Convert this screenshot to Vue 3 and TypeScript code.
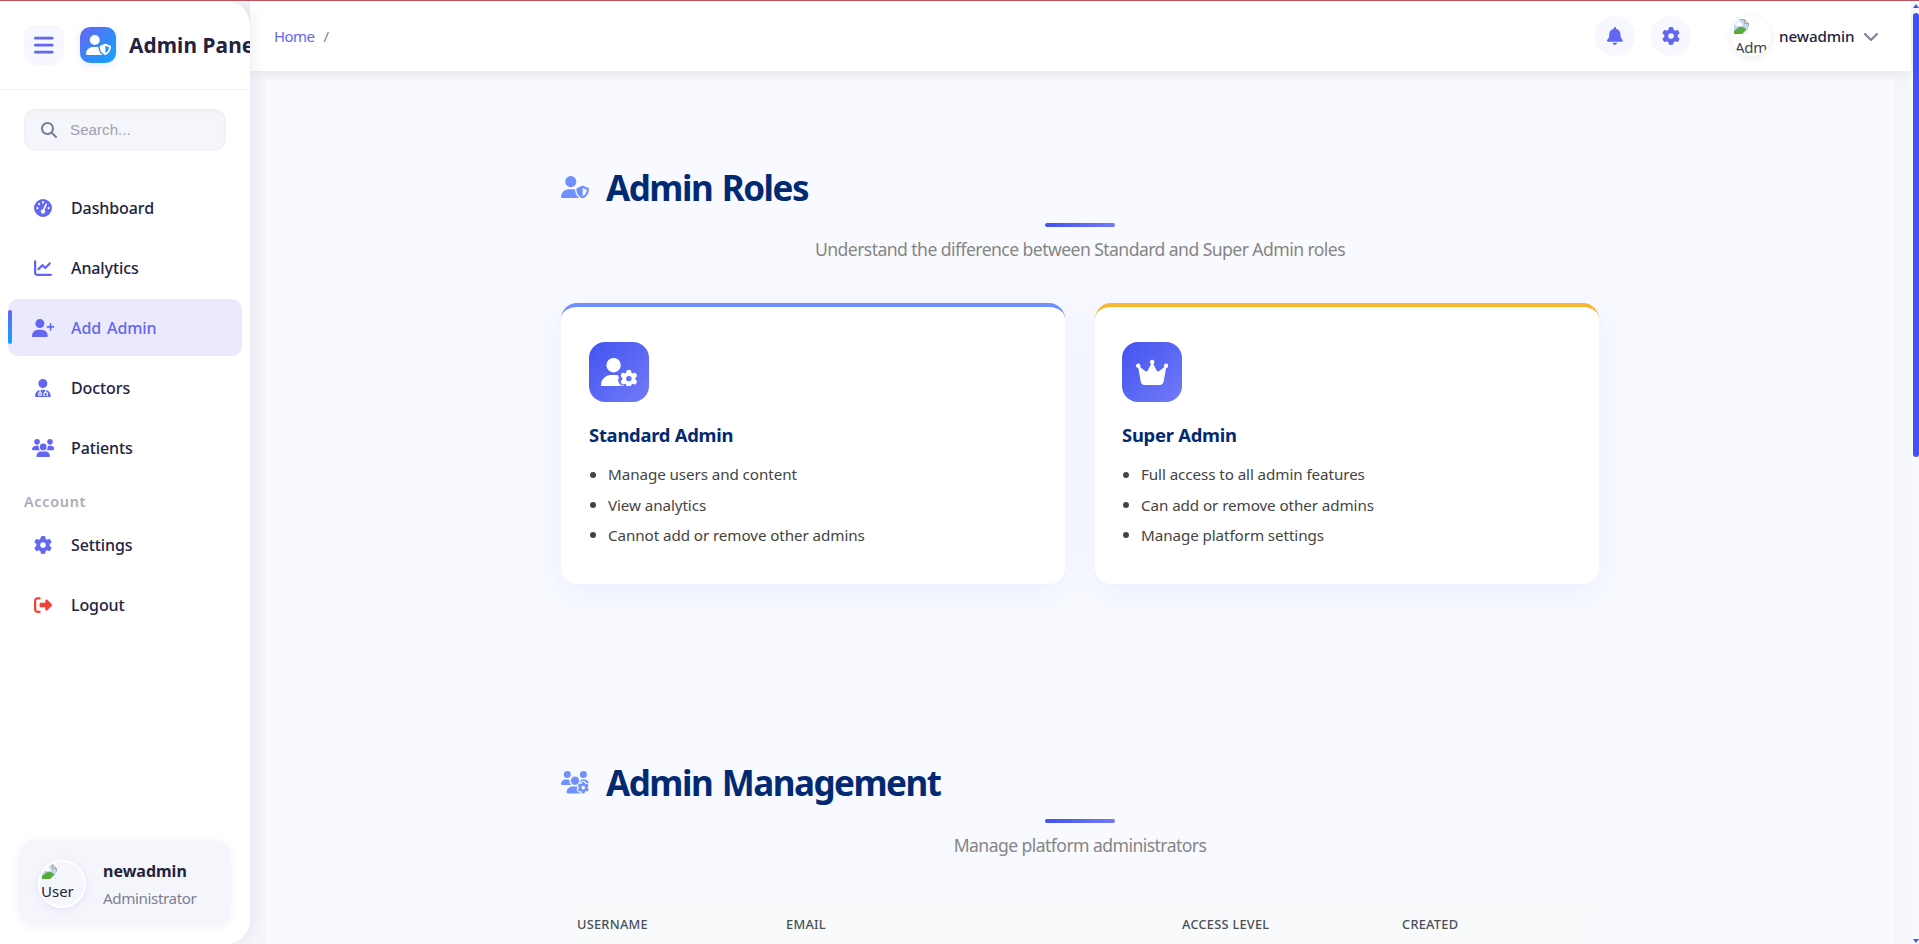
<script setup lang="ts">
interface Icon {
  w: number
  d: string
  gear?: string
}

const gearPath =
  'M495.9 166.6c3.2 8.7 .5 18.4-6.4 24.6l-43.3 39.4c1.1 8.3 1.7 16.8 1.7 25.4s-.6 17.1-1.7 25.4l43.3 39.4c6.9 6.2 9.6 15.9 6.4 24.6c-4.4 11.9-9.7 23.3-15.8 34.3l-4.7 8.1c-6.6 11-14 21.4-22.1 31.2c-5.9 7.2-15.7 9.6-24.5 6.8l-55.7-17.7c-13.4 10.3-28.2 18.9-44 25.4l-12.5 57.1c-2 9.1-9 16.3-18.2 17.8c-13.8 2.3-28 3.5-42.5 3.5s-28.7-1.2-42.5-3.5c-9.2-1.5-16.2-8.7-18.2-17.8l-12.5-57.1c-15.8-6.5-30.6-15.1-44-25.4L83.1 425.9c-8.8 2.8-18.6 .3-24.5-6.8c-8.1-9.8-15.5-20.2-22.1-31.2l-4.7-8.1c-6.1-11-11.4-22.4-15.8-34.3c-3.2-8.7-.5-18.4 6.4-24.6l43.3-39.4C64.6 273.1 64 264.6 64 256s.6-17.1 1.7-25.4L22.4 191.2c-6.9-6.2-9.6-15.9-6.4-24.6c4.4-11.9 9.7-23.3 15.8-34.3l4.7-8.1c6.6-11 14-21.4 22.1-31.2c5.9-7.2 15.7-9.6 24.5-6.8l55.7 17.7c13.4-10.3 28.2-18.9 44-25.4l12.5-57.1c2-9.1 9-16.3 18.2-17.8C227.3 1.2 241.5 0 256 0s28.7 1.2 42.5 3.5c9.2 1.5 16.2 8.7 18.2 17.8l12.5 57.1c15.8 6.5 30.6 15.1 44 25.4l55.7-17.7c8.8-2.8 18.6-.3 24.5 6.8c8.1 9.8 15.5 20.2 22.1 31.2l4.7 8.1c6.1 11 11.4 22.4 15.8 34.3zM256 336a80 80 0 1 0 0-160 80 80 0 1 0 0 160z'

const icons: Record<string, Icon> = {
  bars: { w: 448, d: 'M0 96C0 78.3 14.3 64 32 64H416c17.7 0 32 14.3 32 32s-14.3 32-32 32H32C14.3 128 0 113.7 0 96zM0 256c0-17.7 14.3-32 32-32H416c17.7 0 32 14.3 32 32s-14.3 32-32 32H32c-17.7 0-32-14.3-32-32zM448 416c0 17.7-14.3 32-32 32H32c-17.7 0-32-14.3-32-32s14.3-32 32-32H416c17.7 0 32 14.3 32 32z' },
  userShield: { w: 640, d: 'M224 256A128 128 0 1 0 224 0a128 128 0 1 0 0 256zm-45.7 48C79.8 304 0 383.8 0 482.3C0 498.7 13.3 512 29.7 512H418.3c1.8 0 3.5-.2 5.3-.5c-76.3-55.1-99.8-141-103.1-200.2c-16.1-4.8-33.1-7.3-50.7-7.3H178.3zm308.8-78.3l-120 48C358 277.4 352 286.2 352 296c0 63.3 25.9 168.8 134.8 214.2c5.9 2.5 12.6 2.5 18.5 0C614.1 464.8 640 359.3 640 296c0-9.8-6-18.6-15.1-22.3l-120-48c-5.7-2.3-12.1-2.3-17.8 0zM591.4 312c-3.9 50.7-27.2 116.7-95.4 149.7V273.8L591.4 312z' },
  search: { w: 512, d: 'M416 208c0 45.9-14.9 88.3-40 122.7L502.6 457.4c12.5 12.5 12.5 32.8 0 45.3s-32.8 12.5-45.3 0L330.7 376c-34.4 25.2-76.8 40-122.7 40C93.1 416 0 322.9 0 208S93.1 0 208 0S416 93.1 416 208zM208 352a144 144 0 1 0 0-288 144 144 0 1 0 0 288z' },
  gauge: { w: 512, d: 'M0 256a256 256 0 1 1 512 0A256 256 0 1 1 0 256zM288 96a32 32 0 1 0 -64 0 32 32 0 1 0 64 0zM256 416c35.3 0 64-28.7 64-64c0-17.4-6.9-33.1-18.1-44.6L366 161.7c5.3-12.1-.2-26.3-12.3-31.6s-26.3 .2-31.6 12.3L257.9 288c-.6 0-1.3 0-1.9 0c-35.3 0-64 28.7-64 64s28.7 64 64 64zM176 144a32 32 0 1 0 -64 0 32 32 0 1 0 64 0zM96 288a32 32 0 1 0 0-64 32 32 0 1 0 0 64zm352-32a32 32 0 1 0 -64 0 32 32 0 1 0 64 0z' },
  chart: { w: 512, d: 'M64 64c0-17.7-14.3-32-32-32S0 46.3 0 64V400c0 44.2 35.8 80 80 80H480c17.7 0 32-14.3 32-32s-14.3-32-32-32H80c-8.8 0-16-7.2-16-16V64zm406.6 86.6c12.5-12.5 12.5-32.8 0-45.3s-32.8-12.5-45.3 0L320 210.7l-57.4-57.4c-12.5-12.5-32.8-12.5-45.3 0l-112 112c-12.5 12.5-12.5 32.8 0 45.3s32.8 12.5 45.3 0L240 221.3l57.4 57.4c12.5 12.5 32.8 12.5 45.3 0l128-128z' },
  userPlus: { w: 640, d: 'M96 128a128 128 0 1 1 256 0A128 128 0 1 1 96 128zM0 482.3C0 383.8 79.8 304 178.3 304h91.4C368.2 304 448 383.8 448 482.3c0 16.4-13.3 29.7-29.7 29.7H29.7C13.3 512 0 498.7 0 482.3zM504 312V248H440c-13.3 0-24-10.7-24-24s10.7-24 24-24h64V136c0-13.3 10.7-24 24-24s24 10.7 24 24v64h64c13.3 0 24 10.7 24 24s-10.7 24-24 24H552v64c0 13.3-10.7 24-24 24s-24-10.7-24-24z' },
  doctor: { w: 448, d: 'M224 256a128 128 0 1 0 0-256 128 128 0 1 0 0 256zm-96 55.2C54 332.9 0 401.3 0 482.3C0 498.7 13.3 512 29.7 512H418.3c16.4 0 29.7-13.3 29.7-29.7c0-81-54-149.4-128-171.1V362c27.6 7.1 48 32.2 48 62v40c0 8.8-7.2 16-16 16H336c-8.8 0-16-7.2-16-16s7.2-16 16-16V424c0-17.7-14.3-32-32-32s-32 14.3-32 32v24c8.8 0 16 7.2 16 16s-7.2 16-16 16H256c-8.8 0-16-7.2-16-16V424c0-29.8 20.4-54.9 48-62V304.9c-6-.6-12.1-.9-18.3-.9H178.3c-6.2 0-12.3 .3-18.3 .9v65.4c23.1 6.9 40 28.3 40 53.7c0 30.9-25.1 56-56 56s-56-25.1-56-56c0-25.4 16.9-46.8 40-53.7V311.2zM144 448a24 24 0 1 0 0-48 24 24 0 1 0 0 48z' },
  users: { w: 640, d: 'M144 0a80 80 0 1 1 0 160A80 80 0 1 1 144 0zM512 0a80 80 0 1 1 0 160A80 80 0 1 1 512 0zM0 298.7C0 239.8 47.8 192 106.7 192h42.7c15.9 0 31 3.5 44.6 9.7c-1.3 7.2-1.9 14.7-1.9 22.3c0 38.2 16.8 72.5 43.3 96c-.2 0-.4 0-.7 0H21.3C9.6 320 0 310.4 0 298.7zM405.3 320c-.2 0-.4 0-.7 0c26.6-23.5 43.3-57.8 43.3-96c0-7.6-.7-15-1.9-22.3c13.6-6.3 28.7-9.7 44.6-9.7h42.7C592.2 192 640 239.8 640 298.7c0 11.8-9.6 21.3-21.3 21.3H405.3zM224 224a96 96 0 1 1 192 0 96 96 0 1 1 -192 0zM128 485.3C128 411.7 187.7 352 261.3 352H378.7C452.3 352 512 411.7 512 485.3c0 14.7-11.9 26.7-26.7 26.7H154.7c-14.7 0-26.7-11.9-26.7-26.7z' },
  gear: { w: 512, d: gearPath },
  logout: { w: 512, d: 'M377.9 105.9L500.7 228.7c7.2 7.2 11.3 17.1 11.3 27.3s-4.1 20.1-11.3 27.3L377.9 406.1c-6.4 6.4-15 9.9-24 9.9c-18.7 0-33.9-15.2-33.9-33.9l0-62.1-128 0c-17.7 0-32-14.3-32-32l0-64c0-17.7 14.3-32 32-32l128 0 0-62.1c0-18.7 15.2-33.9 33.9-33.9c9 0 17.6 3.6 24 9.9zM160 96L96 96c-17.7 0-32 14.3-32 32l0 256c0 17.7 14.3 32 32 32l64 0c17.7 0 32 14.3 32 32s-14.3 32-32 32l-64 0c-53 0-96-43-96-96L0 128C0 75 43 32 96 32l64 0c17.7 0 32 14.3 32 32s-14.3 32-32 32z' },
  bell: { w: 448, d: 'M224 0c-17.7 0-32 14.3-32 32V51.2C119 66 64 130.6 64 208v18.8c0 47-17.3 92.4-48.5 127.6l-7.4 8.3c-8.4 9.4-10.4 22.9-5.3 34.4S19.4 416 32 416H416c12.6 0 24-7.4 29.2-18.9s3.1-25-5.3-34.4l-7.4-8.3C401.3 319.2 384 273.9 384 226.8V208c0-77.4-55-142-128-156.8V32c0-17.7-14.3-32-32-32zm45.3 493.3c12-12 18.7-28.3 18.7-45.3H224 160c0 17 6.7 33.3 18.7 45.3s28.3 18.7 45.3 18.7s33.3-6.7 45.3-18.7z' },
  chevron: { w: 512, d: 'M233.4 406.6c12.5 12.5 32.8 12.5 45.3 0l192-192c12.5-12.5 12.5-32.8 0-45.3s-32.8-12.5-45.3 0L256 338.7 86.6 169.4c-12.5-12.5-32.8-12.5-45.3 0s-12.5 32.8 0 45.3l192 192z' },
  crown: { w: 576, d: 'M309 106c11.4-7 19-19.7 19-34c0-22.1-17.9-40-40-40s-40 17.9-40 40c0 14.4 7.6 27 19 34L209.7 220.6c-9.1 18.2-32.7 23.4-48.6 10.7L72 160c5-6.7 8-15 8-24c0-22.1-17.9-40-40-40S0 113.9 0 136s17.9 40 40 40c.2 0 .5 0 .7 0L86.4 427.4c5.5 30.4 32 52.6 63 52.6H426.6c30.9 0 57.4-22.1 63-52.6L535.3 176c.2 0 .5 0 .7 0c22.1 0 40-17.9 40-40s-17.9-40-40-40s-40 17.9-40 40c0 9 3 17.3 8 24l-89.1 71.3c-15.9 12.7-39.5 7.5-48.6-10.7L309 106z' },
  userGear: { w: 640, gear: 'translate(340 212) scale(.606)', d: 'M224 0a128 128 0 1 1 0 256A128 128 0 1 1 224 0zM178.3 304h91.4c11.8 0 23.4 1.2 34.5 3.3c-2.1 18.5 7.4 35.6 21.8 44.8c-16.6 10.6-26.7 31.6-20 53.3c4 12.9 9.4 25.5 16.4 37.6s15.2 23.1 24.4 33c15.7 16.9 39.6 18.4 57.2 8.7v.9c0 9.2 2.7 18.5 7.9 26.3H29.7C13.3 512 0 498.7 0 482.3C0 383.8 79.8 304 178.3 304z' },
  usersGear: { w: 640, gear: 'translate(378 250) scale(.512)', d: 'M144 160A80 80 0 1 0 144 0a80 80 0 1 0 0 160zm368 0A80 80 0 1 0 512 0a80 80 0 1 0 0 160zM0 298.7C0 310.4 9.6 320 21.3 320H234.7c.2 0 .4 0 .7 0c-26.6-23.5-43.3-57.8-43.3-96c0-7.6 .7-15 1.9-22.3c-13.6-6.3-28.7-9.7-44.6-9.7H106.7C47.8 192 0 239.8 0 298.7zM320 320c24 0 45.9-8.8 62.7-23.3c2.5-3.7 5.2-7.3 8-10.7c2.7-3.3 5.7-6.1 9-8.3C410 262.3 416 243.9 416 224c0-53-43-96-96-96s-96 43-96 96s43 96 96 96zM365 352H261.3C187.7 352 128 411.7 128 485.3c0 14.7 11.9 26.7 26.7 26.7H455c-2-5-3-11-3-19l-7-2c-17 10-40 8-55-10c-12-15-21-31-28-49c-6-20 2-40 20-50c-9-8-15-17-17-30zM533.3 192H490.7c-15.9 0-31 3.5-44.6 9.7c1.3 7.2 1.9 14.7 1.9 22.3c0 17.4-3.5 33.9-9.7 49c2.5 .9 4.9 2 7.1 3.3l2.6 1.5c1.3-.8 2.6-1.6 4-2.3v-3c0-19.4 13.3-39.1 35.8-42.6c7.9-1.2 16-1.9 24.2-1.9s16.3 .6 24.2 1.9c22.5 3.5 35.8 23.2 35.8 42.6v3c1.3 .7 2.7 1.5 4 2.3l2.6-1.5c16.8-9.7 40.5-8 54.7 9.7c2.3 2.8 4.5 5.8 6.6 8.7c-2.1-57.1-49-102.7-106.6-102.7z' },
}

const mainNav = [
  { label: 'Dashboard', icon: 'gauge', active: false },
  { label: 'Analytics', icon: 'chart', active: false },
  { label: 'Add Admin', icon: 'userPlus', active: true },
  { label: 'Doctors', icon: 'doctor', active: false },
  { label: 'Patients', icon: 'users', active: false },
]

const accountNav = [
  { label: 'Settings', icon: 'gear', danger: false },
  { label: 'Logout', icon: 'logout', danger: true },
]

const roles = [
  { name: 'Standard Admin', kind: 'standard', icon: 'userGear', items: ['Manage users and content', 'View analytics', 'Cannot add or remove other admins'] },
  { name: 'Super Admin', kind: 'super', icon: 'crown', items: ['Full access to all admin features', 'Can add or remove other admins', 'Manage platform settings'] },
]

const columns = ['Username', 'Email', 'Access Level', 'Created']
</script>

<template>
  <div class="app">
    <header class="topbar">
      <nav class="crumbs"><a>Home</a><span>/</span></nav>
      <div class="actions">
        <button class="round"><svg class="i17" :viewBox="`0 0 ${icons.bell.w} 512`"><path :d="icons.bell.d" /></svg></button>
        <button class="round"><svg class="i17" viewBox="0 0 512 512"><path :d="icons.gear.d" /></svg></button>
        <div class="account">
          <div class="avatar top-avatar">
            <svg class="broken" viewBox="0 0 16 16"><path class="b-sky" d="M1 1h10l4 4v10H1z" /><path class="b-hill" d="M1 15v-3l5-4h4l3 2v1l-4 4z" /><path class="b-cloud" d="M4 7a1.500 1.500 0 0 1 0-3 2 2 0 0 1 4 0 1.500 1.500 0 0 1 0 3z" /><path class="b-line" d="M11.500.5v4h4M4 .5h7.500l4 4v3" /><path class="b-cut" d="M9 16l7-7v3l-3.500 4z" /></svg>
            <span class="alt">Adm</span>
          </div>
          <span class="top-name">newadmin</span>
          <svg class="chev" viewBox="0 0 512 512"><path :d="icons.chevron.d" /></svg>
        </div>
      </div>
    </header>

    <aside class="sidebar">
      <div class="brand">
        <button class="burger"><svg viewBox="0 0 448 512"><path :d="icons.bars.d" /></svg></button>
        <div class="logo"><svg viewBox="0 0 640 512"><path :d="icons.userShield.d" /></svg></div>
        <span class="title">Admin Panel</span>
      </div>
      <div class="search"><svg viewBox="0 0 512 512"><path :d="icons.search.d" /></svg><span>Search...</span></div>
      <nav class="menu">
        <a v-for="n in mainNav" :key="n.label" class="item" :class="{ active: n.active }">
          <span class="slot"><svg :viewBox="`0 0 ${icons[n.icon].w} 512`"><path :d="icons[n.icon].d" /></svg></span>
          <span>{{ n.label }}</span>
        </a>
        <div class="group">Account</div>
        <a v-for="n in accountNav" :key="n.label" class="item" :class="{ danger: n.danger }">
          <span class="slot"><svg :viewBox="`0 0 ${icons[n.icon].w} 512`"><path :d="icons[n.icon].d" /></svg></span>
          <span>{{ n.label }}</span>
        </a>
      </nav>
      <div class="profile">
        <div class="avatar side-avatar">
          <svg class="broken" viewBox="0 0 16 16"><path class="b-sky" d="M1 1h10l4 4v10H1z" /><path class="b-hill" d="M1 15v-3l5-4h4l3 2v1l-4 4z" /><path class="b-cloud" d="M4 7a1.500 1.500 0 0 1 0-3 2 2 0 0 1 4 0 1.500 1.500 0 0 1 0 3z" /><path class="b-line" d="M11.500.5v4h4M4 .5h7.500l4 4v3" /><path class="b-cut" d="M9 16l7-7v3l-3.500 4z" /></svg>
          <span class="alt">User</span>
        </div>
        <div class="who"><strong>newadmin</strong><span>Administrator</span></div>
      </div>
    </aside>

    <main class="content">
      <section class="block">
        <h2><svg viewBox="0 0 640 512"><path :d="icons.userShield.d" /></svg><span>Admin Roles</span></h2>
        <div class="rule"></div>
        <p class="sub">Understand the difference between Standard and Super Admin roles</p>
        <div class="cards">
          <article v-for="r in roles" :key="r.name" class="card" :class="r.kind">
            <div class="badge">
              <svg :viewBox="`0 0 ${icons[r.icon].w} 512`"><path :d="icons[r.icon].d" /><path v-if="icons[r.icon].gear" :d="gearPath" :transform="icons[r.icon].gear" /></svg>
            </div>
            <h3>{{ r.name }}</h3>
            <ul><li v-for="t in r.items" :key="t">{{ t }}</li></ul>
          </article>
        </div>
      </section>
      <section class="block">
        <h2><svg viewBox="0 0 640 512"><path :d="icons.usersGear.d" /><path :d="gearPath" :transform="icons.usersGear.gear" /></svg><span>Admin Management</span></h2>
        <div class="rule"></div>
        <p class="sub">Manage platform administrators</p>
        <div class="thead"><span v-for="c in columns" :key="c">{{ c }}</span></div>
      </section>
    </main>

    <div class="scroll">
      <svg viewBox="0 0 6 4"><path d="M3 0L6 4H0z" /></svg>
      <div class="thumb"></div>
      <svg viewBox="0 0 6 4"><path d="M3 4L0 0h6z" /></svg>
    </div>
  </div>
</template>

<style>
html,
body {
  margin: 0;
  height: 100%;
  overflow: hidden;
}
</style>

<style scoped>
* {
  box-sizing: border-box;
}
.app {
  height: 944px;
  overflow: hidden;
  border-top: 1px solid #b9525e;
  background: #f4f6fb;
  display: grid;
  grid-template-columns: 250px 1fr 8px;
  grid-template-rows: 70px 1fr;
  font-family: 'Noto Sans', 'Open Sans', sans-serif;
  color: #23223f;
}
svg {
  display: block;
  fill: currentColor;
  flex: none;
}
button {
  border: 0;
  padding: 0;
  display: flex;
  align-items: center;
  justify-content: center;
  color: #6366f1;
  background: #f7f8ff;
}
.topbar {
  grid-column: 2;
  grid-row: 1;
  z-index: 1;
  background: #fff;
  box-shadow: 0 2px 12px rgba(0, 0, 0, 0.07);
  display: flex;
  align-items: center;
  justify-content: space-between;
  padding: 0 32px 0 24px;
}
.crumbs {
  display: flex;
  gap: 9px;
  font-size: 15px;
  color: #7b7f93;
}
.crumbs a {
  color: #6366f1;
  letter-spacing: -0.55px;
}
.actions {
  display: flex;
  align-items: center;
  gap: 16px;
}
.round {
  width: 40px;
  height: 40px;
  border-radius: 50%;
}
.i17 {
  height: 18px;
}
.account {
  display: flex;
  align-items: center;
  margin-left: 24px;
}
.avatar {
  border-radius: 50%;
  overflow: hidden;
  flex: none;
}
.top-avatar {
  width: 40px;
  height: 40px;
  padding: 3px 0 0 2px;
  box-shadow: 0 2px 8px rgba(0, 0, 0, 0.08);
}
.broken {
  width: 16px;
  height: 16px;
}
.b-sky { fill: #c3d4f4; }
.b-hill { fill: #58ad3a; }
.b-cloud { fill: #fff; }
.b-line { fill: none; stroke: #a5a5a5; }
.b-cut { fill: #fff; }
.alt {
  display: block;
  font-size: 15px;
  line-height: 21px;
  letter-spacing: -0.3px;
}
.top-avatar .alt {
  padding: 2px 0 0 2px;
  color: #444;
  width: 34px;
}
.top-name {
  margin-left: 8px;
  width: 76px;
  font-size: 15.200px;
  font-weight: 500;
  letter-spacing: -0.1px;
}
.chev {
  width: 16px;
  height: 16px;
  margin-left: 8px;
  color: #7b7f93;
}
.sidebar {
  grid-column: 1;
  grid-row: 1 / 3;
  z-index: 2;
  background: #fff;
  border-radius: 0 24px 24px 0;
  box-shadow: 2px 0 16px rgba(0, 0, 0, 0.07);
  display: flex;
  flex-direction: column;
  overflow: hidden;
}
.brand {
  height: 89px;
  flex: none;
  border-bottom: 1px solid #f1f1f4;
  padding: 0 0 0 24px;
  display: flex;
  align-items: center;
}
.burger {
  width: 40px;
  height: 40px;
  border-radius: 12px;
  flex: none;
}
.burger svg {
  height: 22.400px;
}
.logo {
  width: 36px;
  height: 36px;
  margin: 0 13px 0 16px;
  border-radius: 10px;
  flex: none;
  display: flex;
  align-items: center;
  justify-content: center;
  color: #fff;
  background: linear-gradient(135deg, #6366f1, #0ea5ff);
  box-shadow: 0 2px 8px rgba(99, 102, 241, 0.15);
}
.logo svg {
  height: 20px;
}
.title {
  font-size: 20.800px;
  font-weight: 700;
  white-space: nowrap;
  letter-spacing: 0.1px;
}
.search {
  margin: 19px 24px 0;
  height: 42px;
  flex: none;
  border-radius: 12px;
  background: #f5f6fb;
  box-shadow: inset 0 1px 4px rgba(0, 0, 0, 0.05);
  display: flex;
  align-items: center;
  padding: 0 0 1px 17px;
  gap: 13px;
  font: 15.200px 'Liberation Sans', Arial, sans-serif;
  color: #9fa2b0;
}
.search svg {
  height: 16px;
  color: #7b7f93;
}
.menu {
  padding: 28px 8px 0;
}
.item {
  height: 57px;
  margin-bottom: 3px;
  padding-left: 24px;
  border-radius: 10px;
  display: flex;
  align-items: center;
  gap: 17px;
  font-size: 16px;
  font-weight: 500;
  letter-spacing: -0.1px;
  word-spacing: 2px;
  position: relative;
}
.slot {
  width: 22px;
  display: flex;
  justify-content: center;
  color: #6366f1;
}
.slot svg {
  height: 18px;
}
.danger .slot {
  color: #f44336;
}
.active {
  background: #ebe9fc;
  color: #6366f1;
}
.active::before {
  content: '';
  position: absolute;
  left: 0;
  top: 11px;
  width: 4px;
  height: 34px;
  border-radius: 2px;
  background: linear-gradient(180deg, #6366f1, #0ea5ff);
}
.group {
  height: 37px;
  padding: 13px 0 0 16px;
  font-size: 14.400px;
  line-height: 20px;
  font-weight: 600;
  letter-spacing: 0.7px;
  color: #a9adb9;
}
.profile {
  margin: auto 19px 18px;
  height: 86px;
  flex: none;
  border-radius: 16px;
  background: #f5f6fb;
  box-shadow: 0 2px 8px rgba(99, 102, 241, 0.08);
  display: flex;
  align-items: center;
  padding: 2px 0 0 19px;
}
.side-avatar {
  width: 48px;
  height: 48px;
  border: 2px solid #fff;
  padding: 2px 0 0 1px;
  box-shadow: 0 2px 8px rgba(99, 102, 241, 0.12);
}
.side-avatar .alt {
  padding-top: 1px;
  letter-spacing: 0;
}
.who {
  margin-left: 17px;
  display: flex;
  flex-direction: column;
  gap: 5px;
  line-height: 22px;
}
.who strong {
  font-size: 16px;
}
.who span {
  font-size: 15.200px;
  color: #7b7f93;
  letter-spacing: -0.4px;
}
.content {
  grid-column: 2;
  grid-row: 2;
  margin: 8px 17px 0 16px;
  background: #f9faff;
  padding: 78px 295px 0;
  overflow: hidden;
}
.block {
  height: 595.600px;
}
h2 {
  margin: 0;
  height: 60px;
  display: flex;
  align-items: center;
  gap: 17px;
  font-size: 35px;
  font-weight: 700;
  color: #022a72;
  letter-spacing: -1.5px;
  word-spacing: 2px;
}
h2 svg {
  height: 22.400px;
  color: #7090ff;
}
.rule {
  width: 70px;
  height: 4px;
  margin: 6px auto 0;
  border-radius: 2px;
  background: linear-gradient(90deg, #4353f0, #717bf7);
}
.sub {
  margin: 10px 0 0;
  height: 24px;
  line-height: 24px;
  text-align: center;
  font-size: 17.600px;
  color: #858585;
  letter-spacing: -0.57px;
}
.cards {
  margin-top: 42px;
  display: grid;
  grid-template-columns: 1fr 1fr;
  gap: 30px;
}
.card {
  height: 281px;
  border-radius: 16px;
  background: #fff;
  border-top: 4px solid #7090ff;
  padding: 35px 28px 0;
  box-shadow: 0 8px 32px rgba(67, 83, 240, 0.08);
}
.super {
  border-top-color: #f7b733;
  padding-left: 27px;
}
.badge {
  width: 60px;
  height: 60px;
  border-radius: 16px;
  display: flex;
  align-items: center;
  justify-content: center;
  color: #fff;
  background: linear-gradient(135deg, #4353f0, #717bf7);
}
.badge svg {
  height: 28.800px;
}
h3 {
  margin: 20px 0 0;
  font-size: 18.400px;
  line-height: 26px;
  color: #022a72;
  letter-spacing: -0.25px;
}
ul {
  margin: 11px 0 0;
  padding: 0;
  list-style: none;
  font-size: 15.200px;
  letter-spacing: -0.08px;
  color: #444;
}
li {
  display: flex;
  align-items: center;
  height: 30.400px;
}
li::before {
  content: '';
  width: 6px;
  height: 6px;
  margin: 1px 12px 0 1px;
  border-radius: 50%;
  background: #444;
}
.thead {
  margin-top: 41px;
  height: 60px;
  border-radius: 8px 8px 0 0;
  background: #f8fafb;
  display: grid;
  grid-template-columns: 209px 396px 220px 1fr;
  padding: 0 16px 7px;
  align-items: center;
  font-size: 12.800px;
  font-weight: 500;
  letter-spacing: 0.25px;
  text-transform: uppercase;
  color: #495057;
}
.scroll {
  grid-column: 3;
  grid-row: 1 / 3;
  background: #f9faff;
  display: flex;
  flex-direction: column;
  align-items: center;
  padding: 3px 0 1px 2px;
  color: #4353f0;
}
.scroll svg {
  width: 6px;
  height: 4px;
}
.thumb {
  width: 6px;
  height: 444px;
  margin: 5px 0 auto;
  border-radius: 3px;
  background: #4353f0;
}
</style>
